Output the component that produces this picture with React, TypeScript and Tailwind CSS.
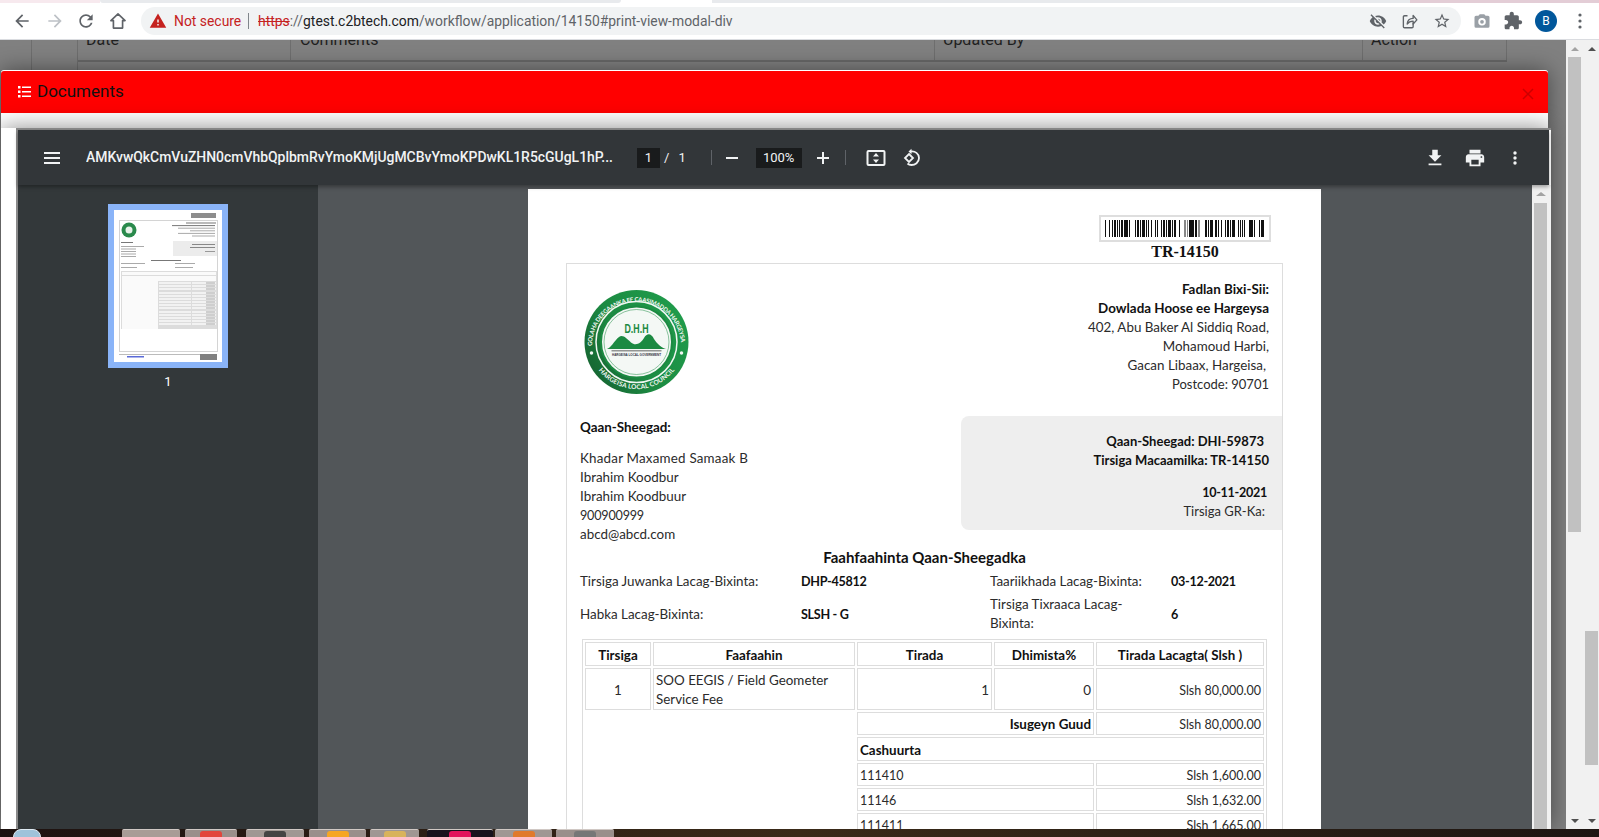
const docFont = { fontFamily: 'Lato, "Liberation Sans", sans-serif' };

// bar x / width in the barcode, read off the reference
const BARS: [number, number][] = [
  [0, 1], [4, 1], [7, 1], [9, 2], [12, 1], [14, 1], [16, 2], [19, 4], [24, 1], [30, 1], [32, 2], [35, 1], [37, 3], [41, 1], [43, 1],
  [46, 1], [50, 1], [52, 1], [56, 1], [58, 2], [61, 1], [63, 3], [67, 1], [69, 2], [74, 1], [79, 0.5], [80.5, 0.5], [82, 0.5],
  [84, 5], [90, 2], [93, 0.5], [94.5, 0.5], [100, 2], [103, 1], [105, 3], [110, 2], [113, 1], [116, 1], [120, 1], [122, 2], [125, 1],
  [127, 3], [133, 1], [135, 1], [137, 1], [139, 1], [144, 4], [149, 1], [154, 1], [156, 3],
];

const TASKBAR = [
  { w: 'w-[58px]', bg: 'bg-[#a89c96]', mr: 'mr-[5px]', dot: '' },
  { w: 'w-[52px]', bg: 'bg-[#9a8f8b]', mr: 'mr-[9px]', dot: 'bg-[#e2453c]' },
  { w: 'w-[58px]', bg: 'bg-[#a09793]', mr: 'mr-[5px]', dot: 'bg-[#444444]' },
  { w: 'w-[57px]', bg: 'bg-[#9a8f8b]', mr: 'mr-[4px]', dot: 'bg-[#f5a623]' },
  { w: 'w-[49px]', bg: 'bg-[#a09793]', mr: 'mr-[8px]', dot: 'bg-[#d8b35c]' },
  { w: 'w-[66px]', bg: 'bg-[#17131c]', mr: 'mr-[2px]', dot: 'bg-[#e2145c]' },
  { w: 'w-[57px]', bg: 'bg-[#a09793]', mr: 'mr-[4px]', dot: 'bg-[#e07a2c]' },
  { w: 'w-[58px]', bg: 'bg-[#9a8f8b]', mr: '', dot: 'bg-[#777777]' },
];

function Mat({ d, size = 20, className = '' }: { d: string; size?: number; className?: string }) {
  return (
    <svg width={size} height={size} viewBox="0 0 24 24" fill="currentColor" className={className}>
      <path d={d} />
    </svg>
  );
}

function Logo() {
  return (
    <svg width="105" height="104" viewBox="0 0 210 208" className="shrink-0">
      <defs>
        <linearGradient id="ring" x1="0" y1="1" x2="1" y2="0.4">
          <stop offset="0" stopColor="#14582c" />
          <stop offset="0.5" stopColor="#1c8a42" />
          <stop offset="1" stopColor="#1f9a4a" />
        </linearGradient>
        <path id="topArc" d="M16 112 A89 89 0 0 1 194 112" />
        <path id="botArc" d="M26 156 A95 95 0 0 0 184 156" />
      </defs>
      <circle cx="105" cy="104" r="104" fill="url(#ring)" />
      <circle cx="105" cy="104" r="81" fill="none" stroke="#f2f7f3" strokeWidth="3" />
      <circle cx="105" cy="104" r="71" fill="#f4f8f5" stroke="#1c8a42" strokeWidth="4" />
      <circle cx="105" cy="104" r="65" fill="#f4f8f5" stroke="#1c8a42" strokeWidth="1" />
      <text fontSize="12" fontWeight="700" fill="#f2f7f3" fontFamily="Lato, sans-serif">
        <textPath href="#topArc" textLength="272">GOLAHA DEEGAANKA EE CAASIMADDA HARGEYSA</textPath>
      </text>
      <text fontSize="13" fontWeight="700" fill="#f2f7f3" fontFamily="Lato, sans-serif">
        <textPath href="#botArc" textLength="176" startOffset="3%">HARGEISA LOCAL COUNCIL</textPath>
      </text>
      <circle cx="15" cy="126" r="3.500" fill="#f2f7f3" />
      <circle cx="195" cy="126" r="3.500" fill="#f2f7f3" />
      <text x="105" y="86" textAnchor="middle" fontSize="24" fontWeight="700" fill="#1c8a42" fontFamily='"Liberation Sans", sans-serif' textLength="48" lengthAdjust="spacingAndGlyphs">D.H.H</text>
      <path d="M46 118 C54 116 60 102 70 94 C78 88 86 98 94 105 C104 113 114 106 120 96 C126 86 134 86 140 98 C146 108 156 116 164 118 Z" fill="#1c8a42" />
      <rect x="55" y="121" width="100" height="1.500" fill="#333" />
      <text x="105" y="131" textAnchor="middle" fontSize="7.500" fontWeight="700" fill="#334" fontFamily='"Liberation Sans", sans-serif' textLength="98" lengthAdjust="spacingAndGlyphs">HARGEISA LOCAL GOVERNMENT</text>
    </svg>
  );
}

function Thumb() {
  const rights = [[186, 32], [172, 45], [178, 39], [190, 27], [178, 39], [192, 25]];
  return (
    <svg width="108" height="152" viewBox="114 210 108 152" className="block bg-white blur-[0.4px]">
      <rect x="191" y="213" width="25" height="5" fill="#8d8d8d" />
      <rect x="119.500" y="220.500" width="98" height="131" fill="none" stroke="#d4d4d4" />
      <circle cx="129" cy="230" r="7.500" fill="#2a8a4c" />
      <circle cx="129" cy="230" r="3.500" fill="#e8f2ea" />
      {rights.map(([x, w], i) => (
        <rect key={i} x={x} y={222.500 + i * 2.600} width={w - 2} height="1" fill={i < 2 ? '#777' : '#aaa'} />
      ))}
      <rect x="173" y="241" width="44" height="15" fill="#ececec" />
      <rect x="192" y="244" width="23" height="1" fill="#888" />
      <rect x="190" y="247" width="25" height="1" fill="#888" />
      <rect x="205" y="251" width="10" height="1" fill="#999" />
      <rect x="121" y="242" width="12" height="1" fill="#777" />
      {[246, 248.500, 251, 253.500, 256].map((y, i) => (
        <rect key={y} x="121" y={y} width={i === 0 ? 23 : 15} height="1" fill="#aaa" />
      ))}
      <rect x="151" y="260" width="30" height="1" fill="#777" />
      <rect x="121" y="263" width="24" height="1" fill="#aaa" />
      <rect x="175" y="263" width="20" height="1" fill="#aaa" />
      <rect x="121" y="267" width="16" height="1" fill="#aaa" />
      <rect x="175" y="267" width="18" height="1" fill="#aaa" />
      <rect x="121" y="271" width="96" height="58" fill="#dcdcdc" />
      <rect x="122" y="272" width="94" height="3" fill="#fafafa" />
      <rect x="122" y="276" width="94" height="5" fill="#fafafa" />
      <rect x="122" y="281" width="36" height="48" fill="#fafafa" />
      {[282, 285, 288, 292, 295, 298, 301, 304, 307, 311, 314, 317, 320, 323].map((y) => (
        <g key={y}>
          <rect x="159" y={y} width="32" height="2" fill="#f2f2f2" />
          <rect x="192" y={y} width="24" height="2" fill="#f2f2f2" />
          <rect x="206" y={y + 0.500} width="9" height="1" fill="#aaa" />
        </g>
      ))}
      <rect x="119" y="354" width="98" height="1" fill="#bbb" />
      <rect x="127" y="356" width="17" height="1.500" fill="#5b6bd8" />
      <rect x="200" y="354" width="17" height="6" fill="#808080" />
    </svg>
  );
}

function ChromeBar() {
  return (
    <div className="h-[37px] shrink-0 flex items-center bg-white text-[#5f6368] border-b border-[#dadce0]">
      <Mat className="ml-[12px] text-[#5f6368]" d="M20 11H7.830l5.590-5.590L12 4l-8 8 8 8 1.410-1.410L7.830 13H20v-2z" />
      <Mat className="ml-[13px] text-[#bdc1c6]" d="M12 4l-1.410 1.410L16.170 11H4v2h12.170l-5.580 5.590L12 20l8-8z" />
      <Mat className="ml-[11px]" d="M17.650 6.350C16.200 4.900 14.210 4 12 4c-4.420 0-7.990 3.580-7.990 8s3.570 8 7.990 8c3.730 0 6.840-2.550 7.730-6h-2.080c-.82 2.330-3.040 4-5.650 4-3.310 0-6-2.690-6-6s2.690-6 6-6c1.660 0 3.140.69 4.220 1.780L13 11h7V4l-2.350 2.350z" />
      <svg width="20" height="20" viewBox="0 0 24 24" fill="none" stroke="currentColor" strokeWidth="2" className="ml-[12px]">
        <path d="M12 3.500 3.500 11.500H6.500V20.500H17.500V11.500H20.500Z" strokeLinejoin="round" />
      </svg>
      <div className="ml-[13px] w-[1320px] h-[28px] rounded-full bg-[#f1f3f4] flex items-center pl-[8px] pr-[10px] text-[13.900px] font-['Roboto',sans-serif] whitespace-nowrap">
        <Mat size={18} className="text-[#c5221f]" d="M1 21h22L12 2 1 21zm12-3h-2v-2h2v2zm0-4h-2v-4h2v4z" />
        <span className="ml-[7px] text-[#c5221f] w-[66px]">Not secure</span>
        <span className="ml-[8px] w-px h-[16px] bg-[#80868b]" />
        <span className="ml-[9px] text-[#c5221f] line-through">https</span>
        <span className="text-[#5f6368]">://</span>
        <span className="text-[#202124]">gtest.c2btech.com</span>
        <span className="text-[#5f6368]">/workflow/application/14150#print-view-modal-div</span>
        <div className="ml-auto flex items-center">
          <Mat size={18} d="M12 7c2.760 0 5 2.240 5 5 0 .65-.13 1.260-.36 1.830l2.920 2.920c1.510-1.260 2.700-2.890 3.430-4.750-1.730-4.390-6-7.500-11-7.500-1.400 0-2.740.25-3.980.7l2.160 2.160C10.740 7.130 11.350 7 12 7zM2 4.270l2.280 2.280.46.46C3.080 8.300 1.780 10.020 1 12c1.730 4.390 6 7.500 11 7.500 1.550 0 3.030-.3 4.380-.84l.42.42L19.730 22 21 20.730 3.270 3 2 4.270zM7.530 9.800l1.550 1.550c-.05.21-.08.43-.08.65 0 1.660 1.340 3 3 3 .22 0 .44-.03.65-.08l1.550 1.550c-.67.33-1.410.53-2.200.53-2.760 0-5-2.240-5-5 0-.79.2-1.530.53-2.200zm4.310-.78l3.150 3.150.02-.16c0-1.660-1.340-3-3-3l-.17.01z" />
          <svg width="18" height="18" viewBox="0 0 24 24" fill="none" stroke="currentColor" strokeWidth="1.800" strokeLinejoin="round" className="ml-[13px]">
            <path d="M10 5H6a1.500 1.500 0 0 0-1.500 1.500v13A1.500 1.500 0 0 0 6 21h10a1.500 1.500 0 0 0 1.500-1.500V15" />
            <path d="M9.500 16c.5-4.500 3.500-7.500 8-7.500V4.500l5 6-5 5.500v-3.800c-3 0-6 1-8 3.800z" />
          </svg>
          <Mat size={18} className="ml-[15px]" d="M22 9.240l-7.190-.62L12 2 9.190 8.630 2 9.240l5.460 4.730L5.820 21 12 17.270 18.180 21l-1.630-7.030L22 9.240zM12 15.400l-3.760 2.270 1-4.280-3.320-2.880 4.380-.38L12 6.100l1.710 4.040 4.380.38-3.320 2.880 1 4.280L12 15.400z" />
        </div>
      </div>
      <Mat size={18} className="ml-[12px] text-[#9aa0a6]" d="M9 3 7.200 5H4a2 2 0 0 0-2 2v12a2 2 0 0 0 2 2h16a2 2 0 0 0 2-2V7a2 2 0 0 0-2-2h-3.200L15 3H9zm3 15a5 5 0 1 1 0-10 5 5 0 0 1 0 10zm0-2.500a2.500 2.500 0 1 0 0-5 2.500 2.500 0 0 0 0 5z" />
      <Mat size={20} className="ml-[12px]" d="M20.500 11H19V7c0-1.100-.9-2-2-2h-4V3.500C13 2.120 11.880 1 10.500 1S8 2.120 8 3.500V5H4c-1.100 0-1.990.9-1.990 2v3.800H3.500c1.490 0 2.700 1.210 2.700 2.700s-1.210 2.700-2.700 2.700H2V20c0 1.100.9 2 2 2h3.800v-1.500c0-1.490 1.210-2.700 2.700-2.700 1.490 0 2.700 1.210 2.700 2.700V22H17c1.100 0 2-.9 2-2v-4h1.500c1.380 0 2.500-1.120 2.500-2.500S21.880 11 20.500 11z" />
      <div className="ml-[12px] size-[22px] rounded-full bg-[#01579b] text-white text-[12px] flex items-center justify-center font-['Roboto',sans-serif]">B</div>
      <svg width="4" height="16" viewBox="0 0 4 16" fill="currentColor" className="ml-[21px]">
        <circle cx="2" cy="2" r="1.600" />
        <circle cx="2" cy="8" r="1.600" />
        <circle cx="2" cy="14" r="1.600" />
      </svg>
    </div>
  );
}

function ViewerToolbar() {
  return (
    <div className="h-[55px] w-[1531px] shrink-0 flex items-center bg-[#323639] text-[#f1f3f4] font-['Roboto',sans-serif] shadow-[0_2px_4px_rgba(0,0,0,0.35)] relative z-10">
      <svg width="16" height="12" viewBox="0 0 16 12" fill="currentColor" className="ml-[26px]">
        <rect width="16" height="2" />
        <rect y="5" width="16" height="2" />
        <rect y="10" width="16" height="2" />
      </svg>
      <span className="ml-[26px] w-[528px] whitespace-nowrap overflow-hidden text-[13.950px] font-medium">AMKvwQkCmVuZHN0cmVhbQplbmRvYmoKMjUgMCBvYmoKPDwKL1R5cGUgL1hP...</span>
      <span className="ml-[23px] w-[23px] h-[20px] bg-[#191b1c] text-[13px] flex items-center justify-center">1</span>
      <span className="ml-[4px] text-[13px]">/</span>
      <span className="ml-[9px] text-[13px]">1</span>
      <span className="ml-[25px] w-px h-[15px] bg-[#5f6368]" />
      <svg width="12" height="2" className="ml-[14px]" fill="currentColor"><rect width="12" height="2" /></svg>
      <span className="ml-[18px] w-[46px] h-[20px] bg-[#191b1c] text-[13px] flex items-center justify-center">100%</span>
      <svg width="12" height="12" viewBox="0 0 12 12" fill="currentColor" className="ml-[15px]">
        <rect y="5" width="12" height="2" />
        <rect x="5" width="2" height="12" />
      </svg>
      <span className="ml-[16px] w-px h-[15px] bg-[#5f6368]" />
      <svg width="20" height="16" viewBox="0 0 20 16" className="ml-[20px]" fill="none" stroke="currentColor" strokeWidth="2">
        <rect x="1.500" y="1" width="17" height="14" rx="1" />
        <path d="M10 3 13 6.500H7ZM10 13 13 9.500H7Z" fill="currentColor" stroke="none" />
      </svg>
      <svg width="20" height="20" viewBox="0 0 20 20" className="ml-[16px]" fill="none" stroke="currentColor" strokeWidth="1.800">
        <path d="M9 3.500c4 -.5 8 2 8 6.500s-4 7-7.500 7c-1.500 0-3-.5-4-1.500" />
        <path d="M9.500 .8 6.500 3.500 9.500 6.200Z" fill="currentColor" stroke="none" />
        <path d="M7 7 11 11 7 15 3 11Z" transform="translate(0 -1)" />
      </svg>
      <Mat size={22} className="ml-[502px]" d="M19 9h-4V3H9v6H5l7 7 7-7zM5 18v2h14v-2H5z" />
      <Mat size={22} className="ml-[18px]" d="M19 8H5c-1.660 0-3 1.340-3 3v6h4v4h12v-4h4v-6c0-1.660-1.340-3-3-3zm-3 11H8v-5h8v5zm3-7c-.55 0-1-.45-1-1s.45-1 1-1 1 .45 1 1-.45 1-1 1zm-1-9H6v4h12V3z" />
      <svg width="4" height="14" viewBox="0 0 4 14" fill="currentColor" className="ml-[27px]">
        <circle cx="2" cy="2" r="1.700" />
        <circle cx="2" cy="7" r="1.700" />
        <circle cx="2" cy="12" r="1.700" />
      </svg>
    </div>
  );
}

function cell(extra = '') {
  return `border border-[#dddddd] px-[2px] pt-[2px] pb-0 leading-[19px] ${extra}`;
}

const boldNumber = 'font-bold text-[#111] text-[12.600px] tracking-[-0.3px]';

function InvoicePage() {
  return (
    <div className="w-[793px] mt-[4px] ml-[210px] shrink-0 bg-white text-[13.400px] leading-[19px] text-[#2b2b2b] h-[700px]" style={docFont}>
      <div className="w-[172px] ml-[571px] pt-[26px]">
        <div className="h-[27px] border-2 border-[#dedede] flex items-center justify-center">
          <svg width="160" height="17" viewBox="0 0 160 17" className="block">
            {BARS.map(([x, w]) => (
              <rect key={x} x={x} width={w} height="17" fill="#111" />
            ))}
          </svg>
        </div>
        <div className="text-center font-['Liberation_Serif',serif] font-bold text-[16px] leading-[20px] text-[#111]">TR-14150</div>
      </div>
      <div className="ml-[38px] w-[717px] mt-[1px] border border-[#dddddd] pt-[16px]">
        <div className="flex justify-between pl-[17px] pr-[13px]">
          <div className="pt-[10px]"><Logo /></div>
          <div className="text-right">
            <p className="font-bold text-[#111]">Fadlan Bixi-Sii:</p>
            <p className="font-bold text-[#111]">Dowlada Hoose ee Hargeysa</p>
            <p>402, Abu Baker Al Siddiq Road,</p>
            <p>Mohamoud Harbi,</p>
            <p className="pr-[3px]">Gacan Libaax, Hargeisa,</p>
            <p className="text-[13px]">Postcode: 90701</p>
          </div>
        </div>
        <div className="mt-[22px] flex justify-between">
          <div className="pl-[13px] pt-[2px]">
            <p className="font-bold text-[#111]">Qaan-Sheegad:</p>
            <div className="mt-[12px]">
              <p className="tracking-[0.2px]">Khadar Maxamed Samaak B</p>
              <p>Ibrahim Koodbur</p>
              <p>Ibrahim Koodbuur</p>
              <p className="text-[12.600px] tracking-[-0.2px]">900900999</p>
              <p>abcd@abcd.com</p>
            </div>
          </div>
          <div className="w-[321px] h-[114px] bg-[#eeeeee] rounded-l-lg pt-[16px] text-right text-[13px]">
            <p className="font-bold text-[#111] pr-[18px]">Qaan-Sheegad: DHI-59873</p>
            <p className="font-bold text-[#111] pr-[13px]">Tirsiga Macaamilka: TR-14150</p>
            <p className={`${boldNumber} pr-[15px] mt-[13px]`}>10-11-2021</p>
            <p className="pr-[17px]">Tirsiga GR-Ka:</p>
          </div>
        </div>
        <p className="mt-[4px] text-center font-bold text-[#111] text-[15px]">Faahfaahinta Qaan-Sheegadka</p>
        <div className="mt-[5px] pl-[13px] grid grid-cols-[221px_189px_181px_1fr] items-center gap-y-[4px]">
          <span>Tirsiga Juwanka Lacag-Bixinta:</span>
          <span className={boldNumber}>DHP-45812</span>
          <span>Taariikhada Lacag-Bixinta:</span>
          <span className={boldNumber}>03-12-2021</span>
          <span>Habka Lacag-Bixinta:</span>
          <span className={boldNumber}>SLSH - G</span>
          <span className="w-[150px]">Tirsiga Tixraaca Lacag-Bixinta:</span>
          <span className={boldNumber}>6</span>
        </div>
        <table className="ml-[15px] mt-[6px] w-[685px] table-fixed border-separate border-spacing-[2px] border border-[#dddddd]">
          <colgroup>
            <col className="w-[66px]" />
            <col className="w-[202px]" />
            <col className="w-[135px]" />
            <col className="w-[100px]" />
            <col className="w-[168px]" />
          </colgroup>
          <thead>
            <tr className="h-[24px]">
              {['Tirsiga', 'Faafaahin', 'Tirada', 'Dhimista%', 'Tirada Lacagta( Slsh )'].map((h) => (
                <th key={h} className={cell('text-center font-bold text-[#111]')}>{h}</th>
              ))}
            </tr>
          </thead>
          <tbody>
            <tr className="h-[42px]">
              <td className={cell('text-center')}>1</td>
              <td className={cell()}>SOO EEGIS / Field Geometer Service Fee</td>
              <td className={cell('text-right pr-[2px]')}>1</td>
              <td className={cell('text-right')}>0</td>
              <td className={cell('text-right text-[12.500px]')}>Slsh 80,000.00</td>
            </tr>
            <tr className="h-[23px]">
              <td rowSpan={5} colSpan={2} />
              <td colSpan={2} className={cell('text-right font-bold text-[#111]')}>Isugeyn Guud</td>
              <td className={cell('text-right text-[12.500px]')}>Slsh 80,000.00</td>
            </tr>
            <tr className="h-[24px]">
              <td colSpan={3} className={cell('font-bold text-[#111]')}>Cashuurta</td>
            </tr>
            <tr className="h-[23px]">
              <td colSpan={2} className={cell('text-[12.500px]')}>111410</td>
              <td className={cell('text-right text-[12.500px]')}>Slsh 1,600.00</td>
            </tr>
            <tr className="h-[23px]">
              <td colSpan={2} className={cell('text-[12.500px]')}>11146</td>
              <td className={cell('text-right text-[12.500px]')}>Slsh 1,632.00</td>
            </tr>
            <tr className="h-[23px]">
              <td colSpan={2} className={cell('text-[12.500px]')}>111411</td>
              <td className={cell('text-right text-[12.500px]')}>Slsh 1,665.00</td>
            </tr>
          </tbody>
        </table>
      </div>
    </div>
  );
}

function PageScrollbars() {
  return (
    <div className="w-[33px] shrink-0 flex bg-[#f1f1f1]">
      <div className="ml-[2px] w-[13px] flex flex-col items-center">
        <div className="h-[17px] shrink-0 flex items-center justify-center"><span className="border-x-[4px] border-x-transparent border-b-[4px] border-b-[#a3a3a3]" /></div>
        <div className="h-[475px] w-full bg-[#c1c1c1]" />
        <div className="mt-auto h-[17px] shrink-0 flex items-center justify-center"><span className="border-x-[4px] border-x-transparent border-t-[4px] border-t-[#505050]" /></div>
      </div>
      <div className="ml-[4px] w-[13px] flex flex-col items-center">
        <div className="h-[17px] shrink-0 flex items-center justify-center"><span className="border-x-[4px] border-x-transparent border-b-[4px] border-b-[#505050]" /></div>
        <div className="mt-[574px] h-[134px] w-full bg-[#c1c1c1]" />
        <div className="mt-auto h-[17px] shrink-0 flex items-center justify-center"><span className="border-x-[4px] border-x-transparent border-t-[4px] border-t-[#505050]" /></div>
      </div>
    </div>
  );
}

function Modal() {
  return (
    <div className="absolute left-[1px] top-[30px] bottom-0 w-[1550px] flex flex-col">
      <div className="w-[1547px] shrink-0 bg-white border-t border-white rounded-t-[3px] shadow-[0_0_22px_rgba(0,0,0,0.45)]">
        <div className="h-[42px] bg-[#ff0000] rounded-t-[3px] flex items-center pl-[17px] pr-[14px] font-['Roboto',sans-serif]">
          <svg width="13" height="12" viewBox="0 0 13 12" fill="white">
            <rect width="2.500" height="2.500" />
            <rect x="4" y=".5" width="9" height="1.500" />
            <rect y="4.500" width="2.500" height="2.500" />
            <rect x="4" y="5" width="9" height="1.500" />
            <rect y="9" width="2.500" height="2.500" />
            <rect x="4" y="9.500" width="9" height="1.500" />
          </svg>
          <span className="ml-[6px] text-[17px] text-[#111]">Documents</span>
          <svg width="12" height="12" viewBox="0 0 12 12" stroke="#cc0000" strokeWidth="1.500" className="ml-auto mt-[3px]">
            <path d="M1 1 11 11M11 1 1 11" />
          </svg>
        </div>
        <div className="h-[15px]" />
      </div>
      <div className="flex-1 min-h-0 bg-white pl-[15px] flex shadow-[0_0_22px_rgba(0,0,0,0.45)]">
        <div className="flex-1 min-w-0 flex flex-col border-t-2 border-l-2 border-[#8a8a8a]">
          <ViewerToolbar />
          <div className="flex-1 min-h-0 flex">
            <div className="w-[300px] shrink-0 bg-[#33383a] flex flex-col items-center pt-[19px]">
              <div className="border-[6px] border-[#8ab4f8]">
                <Thumb />
              </div>
              <span className="mt-[4px] text-[13px] text-white font-['Roboto',sans-serif]">1</span>
            </div>
            <div className="flex-1 min-w-0 bg-[#525659] overflow-hidden">
              <InvoicePage />
            </div>
            <div className="w-[19px] shrink-0 bg-[#f1f1f1] flex flex-col items-start pl-[2px] pr-[4px]">
              <div className="h-[18px] w-[13px] shrink-0 flex items-center justify-center"><span className="border-x-[5px] border-x-transparent border-b-[4px] border-b-[#a3a3a3]" /></div>
              <div className="flex-1 w-[13px] bg-[#c1c1c1]" />
            </div>
          </div>
        </div>
      </div>
    </div>
  );
}

function Backdrop() {
  return (
    <div className="h-full bg-[#808080] overflow-hidden text-[#1f1f1f] font-['Roboto',sans-serif] text-[16px] flex">
      <div className="w-[32px] shrink-0 border-r border-[#6e6e6e]" />
      <div className="w-[46px] shrink-0 border-r border-[#6e6e6e]" />
      <div className="w-[1429px] shrink-0">
        <div className="h-[22px] flex border-b-2 border-[#696969] leading-[0px]">
          <div className="w-[213px] pl-[8px] border-r border-[#6e6e6e]">Date</div>
          <div className="w-[644px] pl-[9px] border-r border-[#6e6e6e]">Comments</div>
          <div className="w-[428px] pl-[8px] border-r border-[#6e6e6e]">Updated By</div>
          <div className="w-[144px] pl-[8px] border-r border-[#6e6e6e]">Action</div>
        </div>
      </div>
    </div>
  );
}

export default function App() {
  return (
    <div className="w-[1599px] h-[837px] flex flex-col overflow-hidden bg-black">
      <div className="h-[3px] shrink-0 flex bg-white">
        <div className="w-[100px] bg-[#f7e9ee]" />
        <div className="w-[521px] bg-[#e8eaed] rounded-b" />
        <div className="w-[91px] bg-white" />
        <div className="w-[698px] bg-[#e8eaed]" />
        <div className="flex-1 bg-[#e3cdd6]" />
      </div>
      <ChromeBar />
      <div className="flex-1 min-h-0 flex">
        <div className="w-[1566px] shrink-0 relative overflow-hidden">
          <Backdrop />
          <Modal />
        </div>
        <PageScrollbars />
      </div>
      <div className="h-[8px] shrink-0 flex bg-gradient-to-r from-[#1d1210] via-[#3a2a18] to-[#1d1512]">
        <div className="ml-[13px] mr-[81px] w-[28px] h-[16px] rounded-full bg-[#9fc3da] border border-[#dfeaf2]" />
        {TASKBAR.map((t) => (
          <div key={t.w + t.mr + t.dot} className={`${t.w} ${t.mr} ${t.bg} rounded-t-[2px] border-t border-[#d0c8c4] flex justify-center pt-[1px]`}>
            {t.dot && <span className={`w-[22px] h-[8px] rounded-t-[3px] ${t.dot}`} />}
          </div>
        ))}
      </div>
    </div>
  );
}
